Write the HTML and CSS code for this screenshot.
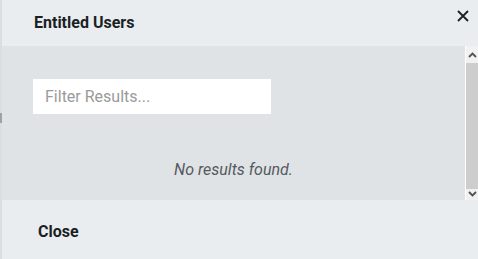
FILE: index.html
```html
<!DOCTYPE html>
<html>
<head>
<meta charset="utf-8">
<link rel="stylesheet" href="styles.css">
</head>
<body>
<div class="page">
  <div class="edge"><span class="edge-mark"></span></div>
  <div class="dialog">
    <header class="head">
      <h1 class="title">Entitled Users</h1>
      <button class="x" aria-label="Close">
        <svg width="12" height="12" viewBox="0 0 12 12"><path d="M1 1L11 11M11 1L1 11" stroke="#1b1f24" stroke-width="1.8" fill="none"/></svg>
      </button>
    </header>
    <section class="body">
      <div class="content">
        <input class="filter" type="text" placeholder="Filter Results...">
        <p class="empty">No results found.</p>
      </div>
      <div class="sbar">
        <div class="sbtn up"><svg width="9" height="6" viewBox="0 0 9 6"><path d="M1 5L4.5 1.5L8 5" stroke="#505050" stroke-width="1.8" fill="none"/></svg></div>
        <div class="thumb"></div>
        <div class="sbtn down"><svg width="9" height="6" viewBox="0 0 9 6"><path d="M1 1L4.5 4.5L8 1" stroke="#505050" stroke-width="1.8" fill="none"/></svg></div>
      </div>
    </section>
    <footer class="foot">
      <span class="close">Close</span>
    </footer>
  </div>
</div>
</body>
</html>
```
FILE: styles.css
```css
html, body {
  margin: 0;
  padding: 0;
}
body {
  font-family: Roboto, "Liberation Sans", sans-serif;
  background: #e9edf0;
  width: 478px;
  height: 259px;
  overflow: hidden;
}
.page {
  display: flex;
  height: 259px;
}
.edge {
  width: 2px;
  background: #dadee1;
  position: relative;
}
.edge-mark {
  position: absolute;
  left: 0;
  top: 113px;
  width: 2px;
  height: 10px;
  background: #9aa3aa;
}
.dialog {
  flex: 1;
  display: flex;
  flex-direction: column;
}
.head {
  height: 46px;
  background: #e9edf0;
  display: flex;
  align-items: flex-start;
  justify-content: space-between;
  box-sizing: border-box;
}
.title {
  margin: 13px 0 0 32px;
  font-size: 16px;
  font-weight: 700;
  color: #1b1f24;
  line-height: 19px;
}
.x {
  border: 0;
  padding: 0;
  background: none;
  margin: 10px 9px 0 0;
  width: 12px;
  height: 12px;
  display: flex;
}
.body {
  height: 154px;
  background: #dfe3e6;
  display: flex;
}
.content {
  flex: 1;
  padding: 33px 0 0 31px;
  box-sizing: border-box;
}
.filter {
  display: block;
  width: 238px;
  height: 35px;
  box-sizing: border-box;
  border: 0;
  outline: 0;
  background: #ffffff;
  padding: 0 12px;
  font-family: Roboto, "Liberation Sans", sans-serif;
  font-size: 16px;
  color: #333;
}
.filter::placeholder {
  color: #9a9a9a;
}
.empty {
  margin: 46px 0 0 -31px;
  text-align: center;
  font-style: italic;
  font-size: 16px;
  color: #555a5e;
  line-height: 20px;
}
.sbar {
  width: 12px;
  border-left: 1px solid #ffffff;
  background: #f1f1f1;
  display: flex;
  flex-direction: column;
}
.sbtn {
  display: flex;
  align-items: center;
  justify-content: center;
}
.sbtn.up {
  height: 17px;
}
.sbtn.down {
  height: 11px;
  align-items: flex-start;
  padding-top: 2px;
  box-sizing: border-box;
}
.thumb {
  flex: 1;
  background: #cdcdcd;
}
.foot {
  flex: 1;
  background: #e9edf0;
  display: flex;
  align-items: center;
}
.close {
  margin: 4px 0 0 36px;
  font-size: 16px;
  font-weight: 700;
  color: #1b1f24;
}
```
